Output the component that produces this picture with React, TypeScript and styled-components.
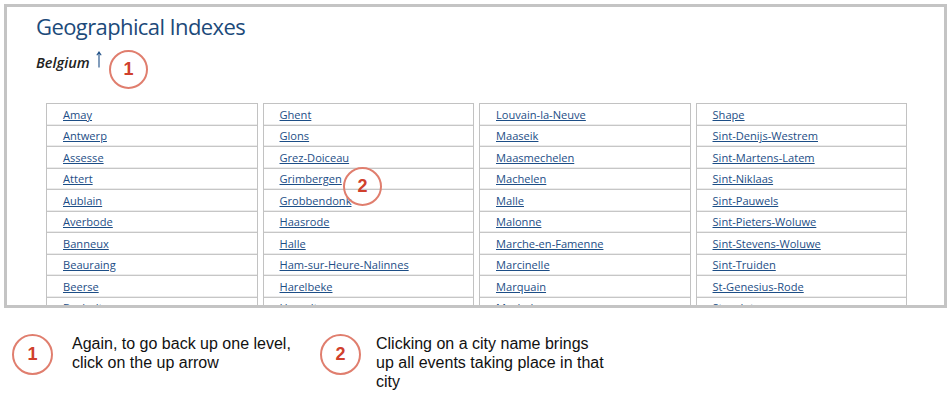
import styled, { createGlobalStyle } from 'styled-components'

const GlobalStyle = createGlobalStyle`
  html, body {
    margin: 0;
    padding: 0;
    background: #ffffff;
  }
`

const columns: string[][] = [
  ['Amay', 'Antwerp', 'Assesse', 'Attert', 'Aublain', 'Averbode', 'Banneux', 'Beauraing', 'Beerse', 'Bocholt'],
  ['Ghent', 'Glons', 'Grez-Doiceau', 'Grimbergen', 'Grobbendonk', 'Haasrode', 'Halle', 'Ham-sur-Heure-Nalinnes', 'Harelbeke', 'Hasselt'],
  ['Louvain-la-Neuve', 'Maaseik', 'Maasmechelen', 'Machelen', 'Malle', 'Malonne', 'Marche-en-Famenne', 'Marcinelle', 'Marquain', 'Mechelen'],
  ['Shape', 'Sint-Denijs-Westrem', 'Sint-Martens-Latem', 'Sint-Niklaas', 'Sint-Pauwels', 'Sint-Pieters-Woluwe', 'Sint-Stevens-Woluwe', 'Sint-Truiden', 'St-Genesius-Rode', 'Stavelot'],
]

const Page = styled.div`
  width: 951px;
  height: 406px;
  padding: 4px 0 0 4px;
  box-sizing: border-box;
  font-family: 'Liberation Sans', Arial, sans-serif;
`

const Frame = styled.div`
  position: relative;
  width: 943px;
  height: 304px;
  box-sizing: border-box;
  border: 3px solid #c4c4c4;
  overflow: hidden;
  background: #ffffff;
`

const Content = styled.div`
  padding: 4px 0 0 29px;
`

const Title = styled.h1`
  margin: 0;
  font-family: 'Open Sans', sans-serif;
  font-weight: 400;
  font-size: 22px;
  letter-spacing: -0.6px;
  line-height: 30px;
  color: #1c4a7a;
`

const Breadcrumb = styled.div`
  display: flex;
  align-items: center;
  gap: 6px;
  margin-top: 11px;
  height: 20px;
`

const Country = styled.span`
  font-family: 'Open Sans', sans-serif;
  font-style: italic;
  font-weight: 600;
  font-size: 14.5px;
  color: #222222;
`

const UpArrow = styled.svg`
  width: 6px;
  height: 17px;
  margin-top: -6px;
`

const Grid = styled.div`
  display: grid;
  grid-template-columns: repeat(4, 211.5px);
  column-gap: 5px;
  margin: 31px 0 0 10px;
`

const Column = styled.ul`
  margin: 0;
  padding: 0;
  list-style: none;
  border: 1px solid #c2c2c2;
  border-bottom: none;
`

const Cell = styled.li`
  height: 21.5px;
  box-sizing: border-box;
  display: flex;
  align-items: center;
  padding-left: 16px;
  border-bottom: 1px solid #c6c6c6;
  box-shadow: inset 0 -1px 0 #ececec;
`

const CityLink = styled.a`
  font-family: 'Open Sans', sans-serif;
  font-size: 11.1px;
  color: #1d4e86;
  text-decoration: underline;
  text-underline-offset: 1px;
`

const Marker = styled.div<{ $size: number }>`
  width: ${(p) => p.$size}px;
  height: ${(p) => p.$size}px;
  box-sizing: border-box;
  border: 2.5px solid #e07e6e;
  border-radius: 50%;
  display: flex;
  align-items: center;
  justify-content: center;
  font-family: 'Liberation Sans', Arial, sans-serif;
  font-weight: 700;
  font-size: ${(p) => Math.round(p.$size * 0.45)}px;
  color: #d0402c;
  background: transparent;
  flex-shrink: 0;
`

const Callout = styled(Marker)`
  position: absolute;
`

const Legend = styled.div`
  display: flex;
  gap: 46px;
  padding: 26px 0 0 8px;
`

const LegendItem = styled.div<{ $width: number; $gap: number }>`
  display: flex;
  align-items: flex-start;
  gap: ${(p) => p.$gap}px;
  width: ${(p) => p.$width}px;
`

const LegendText = styled.p`
  margin: 0;
  font-size: 16px;
  line-height: 19px;
  color: #111111;
  white-space: nowrap;
`

const App = () => {
  return (
    <Page>
      <GlobalStyle />
      <Frame>
        <Content>
          <Title>Geographical Indexes</Title>
          <Breadcrumb>
            <Country>Belgium</Country>
            <UpArrow viewBox="0 0 6 17">
              <path d="M3 16.5V1.5M0.8 4.2L3 1 5.2 4.2" fill="none" stroke="#1d4e86" strokeWidth="1.1" />
            </UpArrow>
          </Breadcrumb>
          <Grid>
            {columns.map((column, i) => (
              <Column key={i}>
                {column.map((city) => (
                  <Cell key={city}>
                    <CityLink href="#">{city}</CityLink>
                  </Cell>
                ))}
              </Column>
            ))}
          </Grid>
        </Content>
        <Callout $size={39} style={{ left: 102, top: 43 }}>1</Callout>
        <Callout $size={39} style={{ left: 336, top: 160 }}>2</Callout>
      </Frame>
      <Legend>
        <LegendItem $width={262} $gap={19}>
          <Marker $size={41}>1</Marker>
          <LegendText>
            Again, to go back up one level,
            <br />
            click on the up arrow
          </LegendText>
        </LegendItem>
        <LegendItem $width={300} $gap={15}>
          <Marker $size={41}>2</Marker>
          <LegendText>
            Clicking on a city name brings
            <br />
            up all events taking place in that
            <br />
            city
          </LegendText>
        </LegendItem>
      </Legend>
    </Page>
  )
}

export default App
